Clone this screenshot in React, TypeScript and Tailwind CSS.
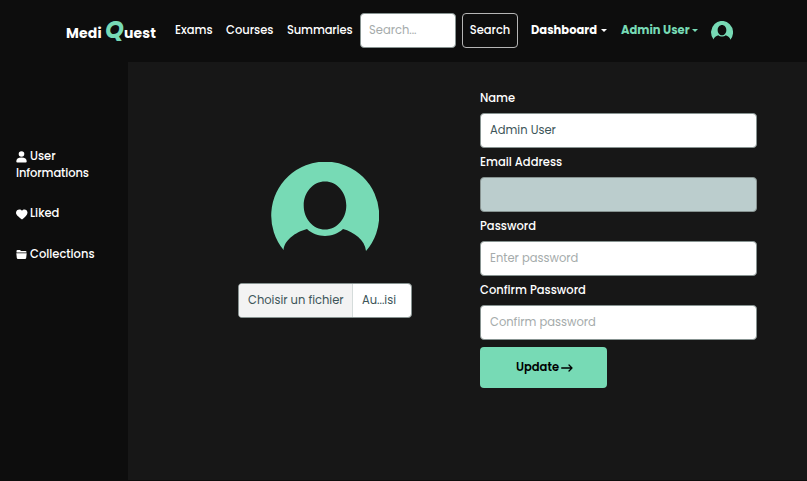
import type { ReactNode } from "react";

function Avatar({ className }: { className: string }) {
  return (
    <svg viewBox="0 0 108 90" preserveAspectRatio="none" className={className} fill="#77dab5">
      <path
        fillRule="evenodd"
        d="M12.6 88A54 54 0 1 1 95 89C94 78 83 70 72 67C62 76.3 46 76.3 36 67C24 70 13 79 12.6 88ZM54 19.5C42.2 19.5 32.7 30 32.7 43.5S42.2 67.5 54 67.5S75.3 57 75.3 43.5S65.8 19.5 54 19.5Z"
      />
    </svg>
  );
}

function Caret() {
  return (
    <svg viewBox="0 0 6 3" className="h-[3px] w-[6px] fill-current">
      <path d="M0 0H6L3 3Z" />
    </svg>
  );
}

function NavLink({ className, children }: { className: string; children: ReactNode }) {
  return (
    <a className={`mt-[21px] block shrink-0 whitespace-nowrap text-[11.5px] font-medium leading-[18px] ${className}`}>
      {children}
    </a>
  );
}

function Header() {
  return (
    <header className="flex h-[62px] shrink-0 items-start bg-[#0d0d0d] pl-[66px] text-white">
      <div className="mt-[15px] flex w-[109px] shrink-0 items-baseline whitespace-nowrap text-[14px] font-bold leading-[30px]">
        <span className="w-[39px] tracking-[0.15px]">Medi</span>
        <span className="w-[19px] text-[24px] font-bold italic text-[#77dab5]">Q</span>
        <span className="tracking-[0.15px]">uest</span>
      </div>
      <NavLink className="w-[51px]">Exams</NavLink>
      <NavLink className="w-[61px]">Courses</NavLink>
      <NavLink className="w-[73px] tracking-[-0.15px]">Summaries</NavLink>
      <input
        placeholder="Search..."
        className="mt-[13px] h-[35px] w-[96px] shrink-0 rounded-[4px] border border-[#879391] bg-white px-2 text-[11.5px] text-[#3d5559] placeholder:text-[#a5abab]"
      />
      <button className="ml-[6px] mt-[13px] h-[35px] w-[56px] shrink-0 rounded-[4px] border border-[#b5b5b5] text-[11.5px] font-medium">
        Search
      </button>
      <div className="ml-[13px] mt-[21px] flex w-[90px] shrink-0 items-center text-[11.5px] font-bold leading-[18px]">
        <span className="w-[70px]">Dashboard</span>
        <Caret />
      </div>
      <div className="mt-[21px] flex w-[90px] shrink-0 items-center whitespace-nowrap text-[11.5px] font-bold leading-[18px] text-[#77dab5]">
        <span className="w-[71px]">Admin User</span>
        <Caret />
      </div>
      <Avatar className="mt-[21px] h-[19px] w-[22px] shrink-0" />
    </header>
  );
}

function Sidebar() {
  return (
    <aside className="w-[128px] shrink-0 bg-[#0d0d0d] pl-4 pt-[86px] text-[11.5px] font-medium leading-[17px] text-white">
      <div>
        <div className="flex items-center">
          <svg viewBox="0 0 11 12" className="mr-[3px] h-[12px] w-[11px] fill-current">
            <circle cx="5.5" cy="3" r="2.8" />
            <path d="M0.3 10.5C0.3 7.8 2 6.6 5.5 6.6S10.7 7.8 10.7 10.5Q10.7 11.5 9.7 11.5H1.3Q0.3 11.5 0.3 10.5Z" />
          </svg>
          User
        </div>
        <div className="tracking-[-0.1px]">Informations</div>
      </div>
      <div className="mt-[23px] flex items-center">
        <svg viewBox="0 0 12 11" className="mr-[2px] mt-[1px] h-[11px] w-[12px] fill-current">
          <path d="M6 1.7C7.4-0.5 11.5 0 11.5 3.8C11.5 6.2 8.5 8.5 6 10.6C3.5 8.5 0 6.2 0 3.8C0 0 4.6-0.5 6 1.7Z" />
        </svg>
        Liked
      </div>
      <div className="mt-[24px] flex items-center">
        <svg viewBox="0 0 11 9" className="mr-[3px] h-[9px] w-[11px] fill-current">
          <path d="M0.5 2.4V1Q0.5 0 1.5 0H4L5 0.9H9.5Q10.5 0.9 10.5 2V2.4ZM0.3 3.2H10.7L10.2 8Q10 9 9 9H2Q1 9 0.8 8Z" />
        </svg>
        Collections
      </div>
    </aside>
  );
}

function Field(props: { label: string; value?: string; placeholder?: string; disabled?: boolean }) {
  return (
    <div className="flex h-[64px] flex-col">
      <label className="h-[24px] whitespace-nowrap text-[11.5px] font-medium leading-[18px] text-white">
        {props.label}
      </label>
      <input
        defaultValue={props.value}
        placeholder={props.placeholder}
        disabled={props.disabled}
        className="h-[35px] w-full rounded-[4px] border border-[#879391] bg-white px-[9px] text-[11.5px] text-[#3d5559] placeholder:text-[#a5abab] disabled:bg-[#bbcdcd]"
      />
    </div>
  );
}

export default function App() {
  return (
    <div className="flex h-[481px] w-[807px] flex-col overflow-hidden bg-[#171717] font-['Poppins','Inter',sans-serif]">
      <Header />
      <div className="flex min-h-0 flex-1 border-b border-[#0d0d0d]">
        <Sidebar />
        <main className="flex flex-1">
          <section className="flex w-[352px] flex-col pl-[110px] pt-[100px]">
            <Avatar className="ml-[33px] h-[90px] w-[108px]" />
            <div className="mt-[31px] flex h-[35px] w-[174px] overflow-hidden rounded-[4px] border border-[#879391] bg-white text-[11.5px] leading-[33px] text-[#3d5559]">
              <span className="w-[114px] shrink-0 whitespace-nowrap border-r border-[#d5dcdb] bg-[#f3f3f3] pl-[9px]">
                Choisir un fichier
              </span>
              <span className="pl-[9px]">Au...isi</span>
            </div>
          </section>
          <form className="w-[277px] pt-[27px]">
            <Field label="Name" value="Admin User" />
            <Field label="Email Address" disabled />
            <Field label="Password" placeholder="Enter password" />
            <Field label="Confirm Password" placeholder="Confirm password" />
            <button
              type="button"
              className="mt-[2px] flex h-[41px] w-[127px] items-center rounded-[4px] bg-[#77dab5] pl-[35px] text-[11.5px] font-semibold text-black"
            >
              <span className="-ml-px w-[47px]">Update</span>
              <svg viewBox="0 0 12 8" className="h-[8px] w-[12px]" fill="none" stroke="currentColor" strokeWidth="1.3" strokeLinecap="round" strokeLinejoin="round">
                <path d="M0.7 4H11M8 1L11 4L8 7" />
              </svg>
            </button>
          </form>
        </main>
      </div>
    </div>
  );
}
